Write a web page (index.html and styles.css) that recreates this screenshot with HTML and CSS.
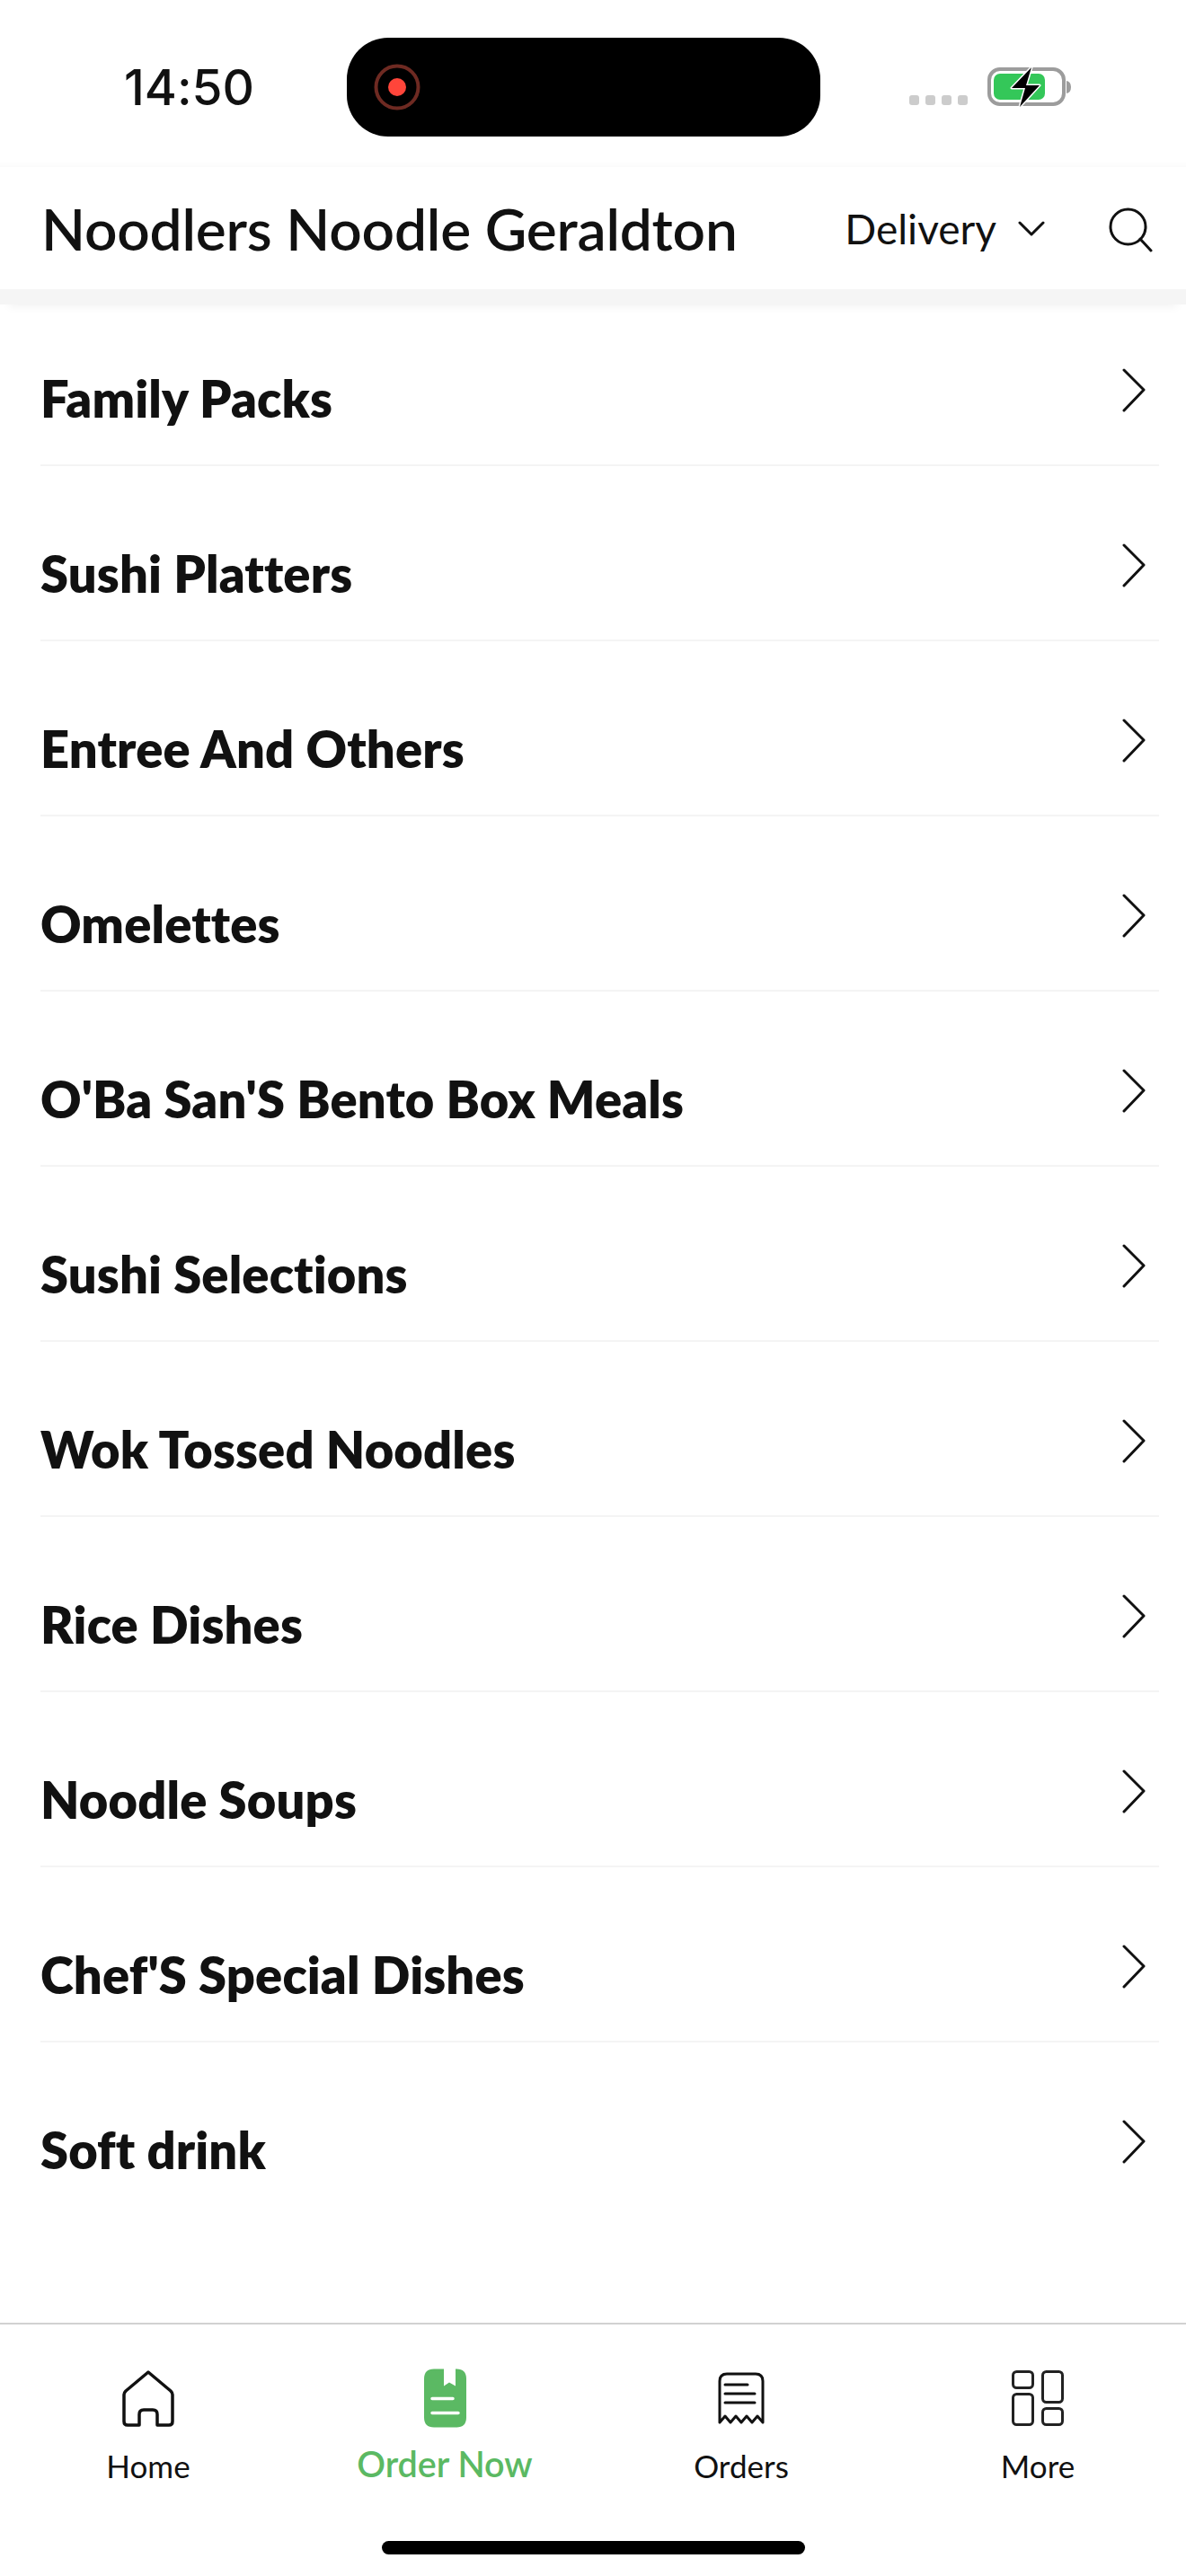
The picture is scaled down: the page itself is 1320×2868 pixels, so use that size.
FILE: index.html
```html
<!DOCTYPE html>
<html>
<head>
    <title>Noodlers Noodle Geraldton</title>
    <link rel="stylesheet" href="styles.css">
</head>
<body>
    <div class="page">
        <div class="status-bar">
            <div class="status-time">14:50</div>
            <div class="island">
                <svg class="rec-icon" width="52" height="52" viewBox="0 0 52 52">
                    <circle cx="26" cy="26" r="23.5" fill="none" stroke="#6e2a22" stroke-width="4"/>
                    <circle cx="26" cy="26" r="10" fill="#ff453a"/>
                </svg>
            </div>
            <div class="signal">
                <span class="signal-dot"></span>
                <span class="signal-dot"></span>
                <span class="signal-dot"></span>
                <span class="signal-dot"></span>
            </div>
            <svg class="battery" width="94" height="46" viewBox="0 0 94 46">
                <rect x="2" y="3" width="83" height="39" rx="12" fill="none" stroke="#9c9c9c" stroke-width="4"/>
                <path d="M88 16 Q93 17 93 23 Q93 29 88 30 Z" fill="#9c9c9c"/>
                <rect x="7" y="8" width="57" height="29" rx="7" fill="#34c759"/>
                <path d="M49 1 L27 24 H42 L36 45 L58 21 H43 Z" fill="#000" stroke="#fff" stroke-width="3" paint-order="stroke" stroke-linejoin="round"/>
            </svg>
        </div>

        <header class="topbar">
            <h1 class="store-name">Noodlers Noodle Geraldton</h1>
            <div class="order-type">
                <span>Delivery</span>
                <svg width="30" height="18" viewBox="0 0 30 18">
                    <path d="M2 2 L15 15 L28 2" fill="none" stroke="#111" stroke-width="3" stroke-linecap="round" stroke-linejoin="round"/>
                </svg>
            </div>
            <svg class="search-icon" width="50" height="50" viewBox="0 0 50 50">
                <circle cx="21.5" cy="21.5" r="19.5" fill="none" stroke="#111" stroke-width="3"/>
                <path d="M35 35 L47 48" stroke="#111" stroke-width="3" stroke-linecap="round"/>
            </svg>
        </header>

        <main class="menu-list">
            <div class="menu-row">
                <span class="menu-name">Family Packs</span>
                <svg class="row-arrow" width="28" height="50" viewBox="0 0 28 50"><path d="M3 2 L25 24 L3 47" fill="none" stroke="#111" stroke-width="3" stroke-linecap="round" stroke-linejoin="round"/></svg>
            </div>
            <div class="menu-row">
                <span class="menu-name">Sushi Platters</span>
                <svg class="row-arrow" width="28" height="50" viewBox="0 0 28 50"><path d="M3 2 L25 24 L3 47" fill="none" stroke="#111" stroke-width="3" stroke-linecap="round" stroke-linejoin="round"/></svg>
            </div>
            <div class="menu-row">
                <span class="menu-name">Entree And Others</span>
                <svg class="row-arrow" width="28" height="50" viewBox="0 0 28 50"><path d="M3 2 L25 24 L3 47" fill="none" stroke="#111" stroke-width="3" stroke-linecap="round" stroke-linejoin="round"/></svg>
            </div>
            <div class="menu-row">
                <span class="menu-name">Omelettes</span>
                <svg class="row-arrow" width="28" height="50" viewBox="0 0 28 50"><path d="M3 2 L25 24 L3 47" fill="none" stroke="#111" stroke-width="3" stroke-linecap="round" stroke-linejoin="round"/></svg>
            </div>
            <div class="menu-row">
                <span class="menu-name">O'Ba San'S Bento Box Meals</span>
                <svg class="row-arrow" width="28" height="50" viewBox="0 0 28 50"><path d="M3 2 L25 24 L3 47" fill="none" stroke="#111" stroke-width="3" stroke-linecap="round" stroke-linejoin="round"/></svg>
            </div>
            <div class="menu-row">
                <span class="menu-name">Sushi Selections</span>
                <svg class="row-arrow" width="28" height="50" viewBox="0 0 28 50"><path d="M3 2 L25 24 L3 47" fill="none" stroke="#111" stroke-width="3" stroke-linecap="round" stroke-linejoin="round"/></svg>
            </div>
            <div class="menu-row">
                <span class="menu-name">Wok Tossed Noodles</span>
                <svg class="row-arrow" width="28" height="50" viewBox="0 0 28 50"><path d="M3 2 L25 24 L3 47" fill="none" stroke="#111" stroke-width="3" stroke-linecap="round" stroke-linejoin="round"/></svg>
            </div>
            <div class="menu-row">
                <span class="menu-name">Rice Dishes</span>
                <svg class="row-arrow" width="28" height="50" viewBox="0 0 28 50"><path d="M3 2 L25 24 L3 47" fill="none" stroke="#111" stroke-width="3" stroke-linecap="round" stroke-linejoin="round"/></svg>
            </div>
            <div class="menu-row">
                <span class="menu-name">Noodle Soups</span>
                <svg class="row-arrow" width="28" height="50" viewBox="0 0 28 50"><path d="M3 2 L25 24 L3 47" fill="none" stroke="#111" stroke-width="3" stroke-linecap="round" stroke-linejoin="round"/></svg>
            </div>
            <div class="menu-row">
                <span class="menu-name">Chef'S Special Dishes</span>
                <svg class="row-arrow" width="28" height="50" viewBox="0 0 28 50"><path d="M3 2 L25 24 L3 47" fill="none" stroke="#111" stroke-width="3" stroke-linecap="round" stroke-linejoin="round"/></svg>
            </div>
            <div class="menu-row">
                <span class="menu-name">Soft drink</span>
                <svg class="row-arrow" width="28" height="50" viewBox="0 0 28 50"><path d="M3 2 L25 24 L3 47" fill="none" stroke="#111" stroke-width="3" stroke-linecap="round" stroke-linejoin="round"/></svg>
            </div>
        </main>

        <nav class="tab-bar">
            <div class="tab">
                <svg class="tab-icon" width="58" height="64" viewBox="0 0 58 64">
                    <path d="M29 3 L54 24 Q56 26 56 28 V58 Q56 62 52 62 H39 V50 Q39 45 34 45 H24 Q19 45 19 50 V62 H6 Q2 62 2 58 V28 Q2 26 4 24 Z" fill="none" stroke="#111" stroke-width="3.5" stroke-linejoin="round"/>
                </svg>
                <span class="tab-label">Home</span>
            </div>
            <div class="tab tab-active">
                <svg class="tab-icon" width="47" height="65" viewBox="0 0 47 65">
                    <path d="M11 0 H22 V19 L28 15 L35 19 V0 H36 Q47 0 47 11 V54 Q47 65 36 65 H11 Q0 65 0 54 V11 Q0 0 11 0 Z" fill="#5bb963"/>
                    <path d="M9 33 H32 M9 49 H38" stroke="#fff" stroke-width="3.5" stroke-linecap="round"/>
                </svg>
                <span class="tab-label">Order Now</span>
            </div>
            <div class="tab">
                <svg class="tab-icon" width="52" height="58" viewBox="0 0 52 58">
                    <path d="M2 56 V10 Q2 2 10 2 H42 Q50 2 50 10 V56 L44 49 L38 56 L32 49 L26 56 L20 49 L14 56 L8 49 Z" fill="none" stroke="#111" stroke-width="3" stroke-linejoin="round"/>
                    <path d="M8 14 H33 M8 24 H41 M8 34 H41" stroke="#111" stroke-width="3" stroke-linecap="round"/>
                </svg>
                <span class="tab-label">Orders</span>
            </div>
            <div class="tab">
                <svg class="tab-icon" width="58" height="62" viewBox="0 0 58 62">
                    <rect x="1.5" y="1.5" width="22" height="18" rx="4" fill="none" stroke="#222" stroke-width="3"/>
                    <rect x="1.5" y="26.5" width="22" height="34" rx="4" fill="none" stroke="#222" stroke-width="3"/>
                    <rect x="34.5" y="1.5" width="22" height="34" rx="4" fill="none" stroke="#222" stroke-width="3"/>
                    <rect x="34.5" y="42.5" width="22" height="18" rx="4" fill="none" stroke="#222" stroke-width="3"/>
                </svg>
                <span class="tab-label">More</span>
            </div>
        </nav>

        <div class="home-bar-wrap">
            <div class="home-bar"></div>
        </div>
    </div>
</body>
</html>
```

FILE: styles.css
```css
* {
    box-sizing: border-box;
}

body {
    margin: 0;
    background-color: #fff;
    font-family: Lato, "Liberation Sans", sans-serif;
    font-variant-ligatures: none;
    color: #111;
}

.page {
    width: 1320px;
    height: 2868px;
    display: flex;
    flex-direction: column;
    overflow: hidden;
}

/* status bar */
.status-bar {
    height: 186px;
    display: flex;
    align-items: flex-start;
    box-shadow: inset 0 -8px 8px -8px rgba(0, 0, 0, 0.04);
}

.status-time {
    width: 386px;
    padding: 68px 0 0 138px;
    font-family: Inter, sans-serif;
    font-size: 55px;
    font-weight: 500;
    line-height: 58px;
}

.island {
    width: 527px;
    height: 110px;
    margin-top: 42px;
    padding: 29px 0 0 30px;
    background-color: #000;
    border-radius: 46px;
}

.rec-icon {
    display: block;
}

.signal {
    display: flex;
    gap: 7px;
    margin: 106px 0 0 99px;
}

.signal-dot {
    width: 11px;
    height: 11px;
    background-color: #ccc;
    border-radius: 3px;
}

.battery {
    margin: 74px 0 0 22px;
}

/* header */
.topbar {
    position: relative;
    z-index: 1;
    height: 153px;
    display: flex;
    align-items: flex-start;
    padding: 0 36px 0 46px;
    background-color: #fff;
    border-bottom: 17px solid #f5f5f5;
    box-shadow: 0 12px 10px -10px rgba(0, 0, 0, 0.06);
}

.store-name {
    margin: 0;
    padding-top: 31px;
    flex: 1;
    font-size: 64px;
    font-weight: 600;
    letter-spacing: -0.2px;
    line-height: 76px;
    white-space: nowrap;
}

.order-type {
    display: flex;
    align-items: center;
    gap: 24px;
    margin-top: 41px;
    margin-right: 71px;
    font-size: 46px;
    line-height: 56px;
}

.search-icon {
    margin-top: 45px;
}

/* list */
.menu-list {
    flex: 1;
    margin-top: -15px;
    padding: 0 30px 0 45px;
}

.menu-row {
    height: 195px;
    display: flex;
    justify-content: space-between;
    align-items: flex-start;
    padding: 86px 14px 0 0;
    border-bottom: 2px solid #f4f4f4;
}

.menu-row:last-child {
    border-bottom: none;
}

.menu-name {
    font-size: 56px;
    font-weight: 800;
    letter-spacing: 0.15px;
    line-height: 68px;
}

/* bottom tabs */
.tab-bar {
    height: 210px;
    display: flex;
    border-top: 2px solid #d2d2d2;
    padding-top: 49px;
}

.tab {
    flex: 1;
    display: flex;
    flex-direction: column;
    align-items: center;
}

.tab-icon {
    display: block;
    height: 66px;
}

.tab-label {
    margin-top: 21px;
    font-size: 35px;
    line-height: 42px;
}

.tab-active {
    color: #5bb963;
}

.tab-active .tab-label {
    margin-top: 17px;
    font-size: 39.5px;
    font-weight: 600;
    line-height: 46px;
}

.home-bar-wrap {
    height: 72px;
    padding-top: 33px;
}

.home-bar {
    width: 471px;
    height: 15px;
    margin-left: 425px;
    background-color: #000;
    border-radius: 8px;
}
```
